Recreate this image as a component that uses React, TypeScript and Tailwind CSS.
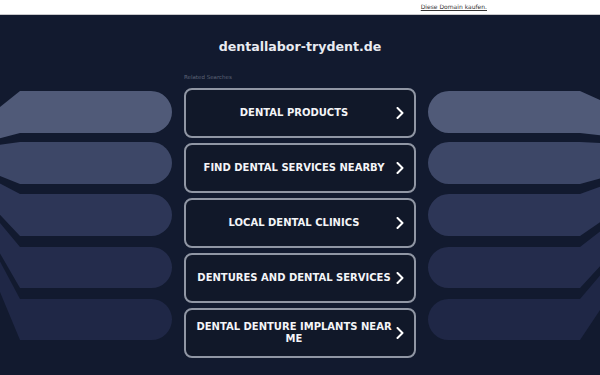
import React from "react";

const items = [
  "DENTAL PRODUCTS",
  "FIND DENTAL SERVICES NEARBY",
  "LOCAL DENTAL CLINICS",
  "DENTURES AND DENTAL SERVICES",
  "DENTAL DENTURE IMPLANTS NEAR ME",
];

const bars = [
  { t: 91, b: 133, c: "#505a78" },
  { t: 142, b: 184, c: "#3d4767" },
  { t: 194, b: 236, c: "#2d3657" },
  { t: 247, b: 288, c: "#242c4c" },
  { t: 299, b: 340, c: "#1f2746" },
];

function leftPath(t: number, b: number) {
  const r = (b - t) / 2;
  const k = 20 / 78;
  const t0 = t + (153 - t) * k;
  const b0 = b + (153 - b) * k;
  return `M0 ${t0} L20 ${t} L${172 - r} ${t} A${r} ${r} 0 0 1 ${172 - r} ${b} L20 ${b} L0 ${b0} Z`;
}

function rightPath(t: number, b: number) {
  const r = (b - t) / 2;
  const k = 20 / 128;
  const t0 = t + (148 - t) * k;
  const b0 = b + (148 - b) * k;
  return `M600 ${t0} L580 ${t} L${428 + r} ${t} A${r} ${r} 0 0 0 ${428 + r} ${b} L580 ${b} L600 ${b0} Z`;
}

function Chevron() {
  return (
    <svg width="8" height="12" viewBox="0 0 8 12" className="shrink-0 ml-[2px]">
      <path d="M1.5 1 L6.5 6 L1.5 11" fill="none" stroke="#ffffff" strokeWidth="2" strokeLinecap="round" strokeLinejoin="round" />
    </svg>
  );
}

export default function App() {
  return (
    <div
      className="relative w-[600px] h-[375px] overflow-hidden bg-[#121a2f]"
      style={{ fontFamily: '"DejaVu Sans", sans-serif' }}
    >
      <svg className="absolute inset-0" width="600" height="375" viewBox="0 0 600 375">
        {bars.map((bar, i) => (
          <g key={i} fill={bar.c}>
            <path d={leftPath(bar.t, bar.b)} />
            <path d={rightPath(bar.t, bar.b)} />
          </g>
        ))}
      </svg>
      <div className="relative flex flex-col">
        <div className="h-[15px] bg-white border-b border-[#c9c9cc] flex justify-end items-center pr-[113px]">
          <a className="text-[6px] leading-[8px] text-[#333] underline">Diese Domain kaufen.</a>
        </div>
        <div className="mt-[24px] text-center text-[12.6px] leading-[16px] font-bold text-[#e9ebf1]">
          dentallabor-trydent.de
        </div>
        <div className="w-[232px] mx-auto mt-[18px]">
          <div className="text-[5.5px] leading-[8px] text-[#5d6477]">Related Searches</div>
          <div className="mt-[7px] flex flex-col gap-[5px]">
            {items.map((it) => (
              <div
                key={it}
                className="h-[50px] rounded-[8px] border-2 border-[#9096a4] bg-[#111829] flex items-center pl-[8px] pr-[10px]"
              >
                <div className="flex-1 text-center text-[10px] leading-[12px] font-bold text-[#f4f5f8]">
                  {it}
                </div>
                <Chevron />
              </div>
            ))}
          </div>
        </div>
      </div>
    </div>
  );
}
